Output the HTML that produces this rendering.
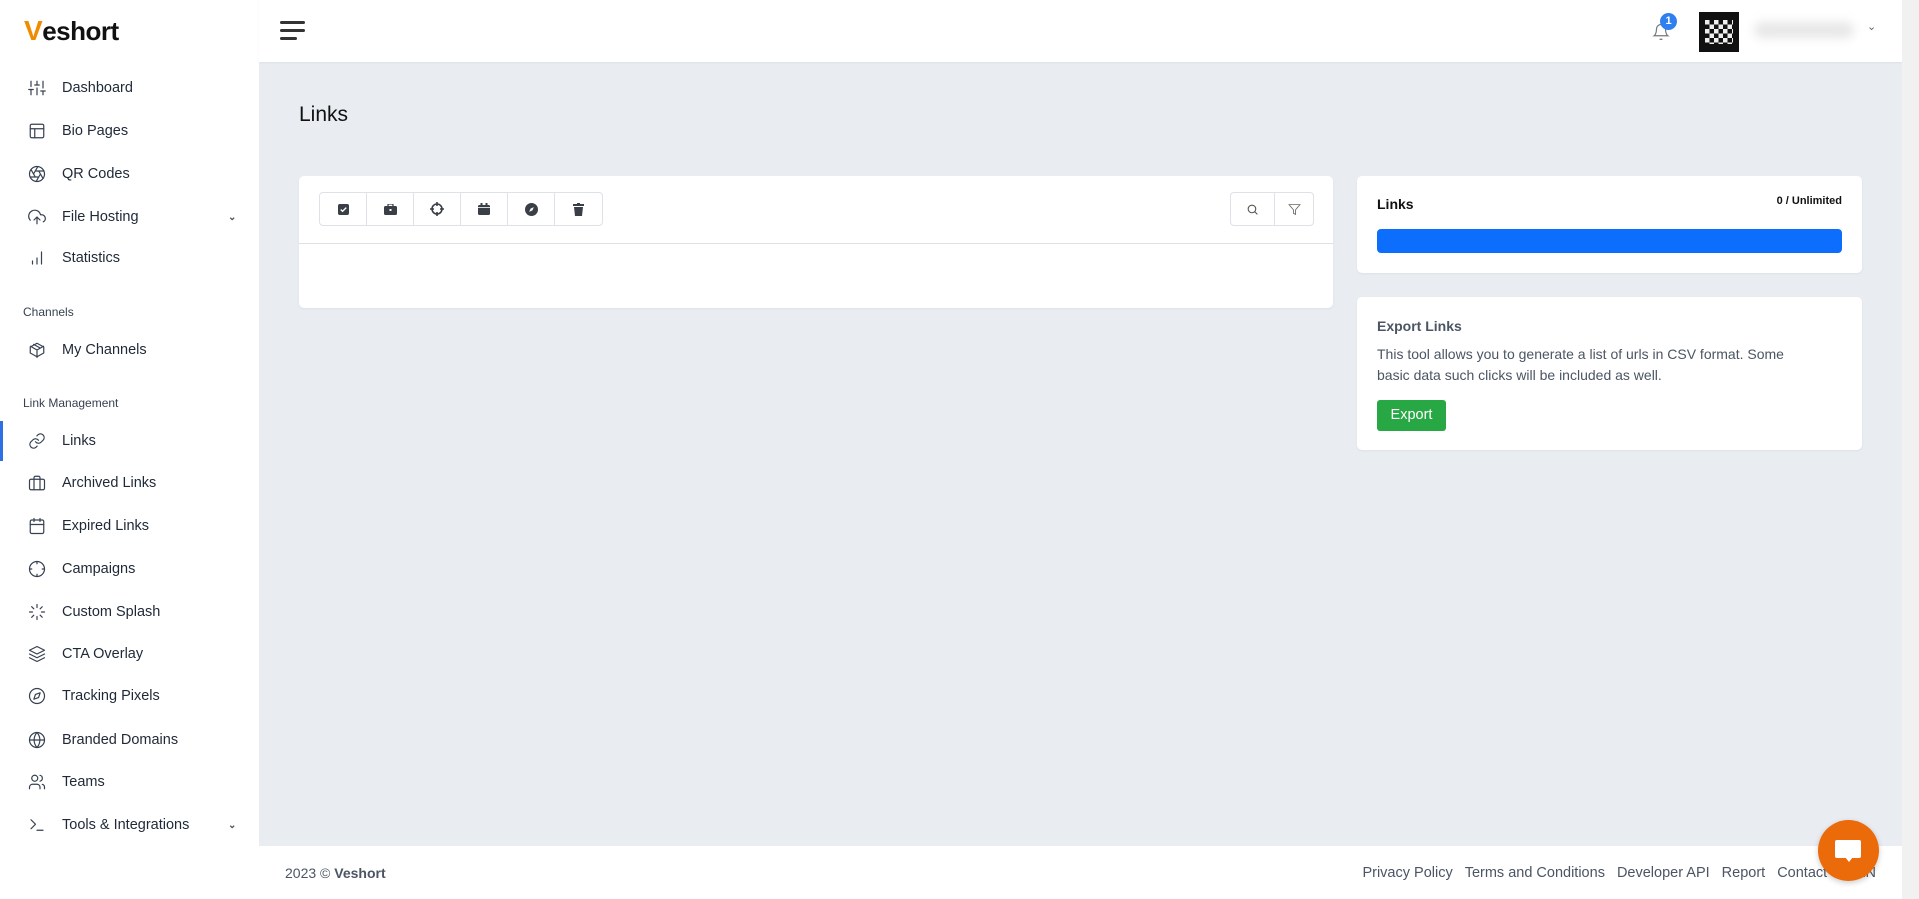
<!DOCTYPE html>
<html><head><meta charset="utf-8"><style>
*{box-sizing:border-box;margin:0;padding:0}
body{width:1919px;height:899px;overflow:hidden;background:#e9ecf1;font-family:"Liberation Sans",sans-serif;position:relative;color:#1f2937}
.sb{position:absolute;left:0;top:0;width:259px;height:899px;background:#fff}
.hd{position:absolute;left:259px;top:0;width:1643px;height:62px;background:#fff;box-shadow:0 1px 2px rgba(0,0,0,.05)}
.scroll{position:absolute;right:0;top:0;width:17px;height:899px;background:#f1f1f1}
.ni{position:absolute;left:0;width:259px;height:40px;display:flex;align-items:center;font-size:14.5px;color:#1f2937}
.ni svg{position:absolute;left:28px;width:18px;height:18px;fill:none;stroke:#374151;stroke-width:1.6;stroke-linecap:round;stroke-linejoin:round}
.ni span{position:absolute;left:62px}
.ni .ch{position:absolute;left:228px;font-size:10px;color:#555}
.sec{position:absolute;left:23px;font-size:12px;color:#374151}
.card{position:absolute;background:#fff;border-radius:5px;box-shadow:0 1px 2px rgba(0,0,0,.05)}
.tb{position:absolute;display:flex;border:1px solid #dee2e6;border-radius:4px;height:34px}
.tb div{width:47px;border-right:1px solid #dee2e6;display:flex;align-items:center;justify-content:center}
.tb div:last-child{border-right:none}
.ft{position:absolute;left:259px;top:846px;width:1643px;height:53px;background:#fff}
.fl{position:absolute;right:26px;top:19px;font-size:14.5px;color:#4b5563;display:flex;gap:12px}
</style></head><body>
<div class="sb">
 <div style="position:absolute;left:24px;top:15px;font-size:26px;font-weight:bold;color:#111;letter-spacing:-0.5px"><span style="color:#f08c00;font-size:28px">V</span>eshort</div>
 <div class="ni" style="top:68px"><svg viewBox="0 0 24 24"><path d="M4 21v-7M4 10V3M12 21v-9M12 8V3M20 21v-5M20 12V3M1 14h6M9 8h6M17 16h6"/></svg><span>Dashboard</span></div>
 <div class="ni" style="top:111px"><svg viewBox="0 0 24 24"><rect x="3" y="3" width="18" height="18" rx="2"/><path d="M3 9h18M9 21V9"/></svg><span>Bio Pages</span></div>
 <div class="ni" style="top:154px"><svg viewBox="0 0 24 24"><circle cx="12" cy="12" r="10"/><path d="M14.3 8l5.7 9.9M9.7 8h11.5M7.4 12l5.7-9.9M9.7 16L4 6.1M14.3 16H2.8M16.6 12l-5.7 9.9"/></svg><span>QR Codes</span></div>
 <div class="ni" style="top:197px"><svg viewBox="0 0 24 24"><path d="M16 16l-4-4-4 4M12 12v9M20.4 18.4A5 5 0 0018 9h-1.3A8 8 0 103 16.3"/></svg><span>File Hosting</span><b class="ch">&#8964;</b></div>
 <div class="ni" style="top:238px"><svg viewBox="0 0 24 24"><path d="M18 20V4M12 20v-8M6 20v-4"/></svg><span>Statistics</span></div>
 <div class="sec" style="top:305px">Channels</div>
 <div class="ni" style="top:330px"><svg viewBox="0 0 24 24"><path d="M21 16V8l-9-5-9 5v8l9 5 9-5zM3.3 7L12 12l8.7-5M12 22V12M7.5 4.5l9 5"/></svg><span>My Channels</span></div>
 <div class="sec" style="top:396px">Link Management</div>
 <div style="position:absolute;left:0;top:421px;width:3px;height:40px;background:#2f6fe4"></div>
 <div class="ni" style="top:421px"><svg viewBox="0 0 24 24"><path d="M10 13a5 5 0 007.5.5l3-3a5 5 0 00-7-7l-1.7 1.7"/><path d="M14 11a5 5 0 00-7.5-.5l-3 3a5 5 0 007 7l1.7-1.7"/></svg><span>Links</span></div>
 <div class="ni" style="top:463px"><svg viewBox="0 0 24 24"><rect x="2" y="7" width="20" height="14" rx="2"/><path d="M16 21V5a2 2 0 00-2-2h-4a2 2 0 00-2 2v16"/></svg><span>Archived Links</span></div>
 <div class="ni" style="top:506px"><svg viewBox="0 0 24 24"><rect x="3" y="4" width="18" height="18" rx="2"/><path d="M16 2v4M8 2v4M3 10h18"/></svg><span>Expired Links</span></div>
 <div class="ni" style="top:549px"><svg viewBox="0 0 24 24"><circle cx="12" cy="12" r="10"/><path d="M22 12h-3M5 12H2M12 5V2M12 22v-3"/></svg><span>Campaigns</span></div>
 <div class="ni" style="top:592px"><svg viewBox="0 0 24 24"><path d="M12 2v4M12 18v4M4.9 4.9l2.8 2.8M16.2 16.2l2.8 2.8M2 12h4M18 12h4M4.9 19.1l2.8-2.8M16.2 7.8l2.8-2.8"/></svg><span>Custom Splash</span></div>
 <div class="ni" style="top:634px"><svg viewBox="0 0 24 24"><path d="M12 2L2 7l10 5 10-5-10-5zM2 17l10 5 10-5M2 12l10 5 10-5"/></svg><span>CTA Overlay</span></div>
 <div class="ni" style="top:676px"><svg viewBox="0 0 24 24"><circle cx="12" cy="12" r="10"/><path d="M16.2 7.8l-2.1 6.3-6.3 2.1 2.1-6.3z"/></svg><span>Tracking Pixels</span></div>
 <div class="ni" style="top:720px"><svg viewBox="0 0 24 24"><circle cx="12" cy="12" r="10"/><path d="M2 12h20M12 2a15 15 0 010 20M12 2a15 15 0 000 20"/></svg><span>Branded Domains</span></div>
 <div class="ni" style="top:762px"><svg viewBox="0 0 24 24"><circle cx="9" cy="7" r="4"/><path d="M2 21v-2a4 4 0 014-4h6a4 4 0 014 4v2M16 3.1a4 4 0 010 7.8M22 21v-2a4 4 0 00-3-3.9"/></svg><span>Teams</span></div>
 <div class="ni" style="top:805px"><svg viewBox="0 0 24 24"><path d="M4 17l6-6-6-6M12 19h8"/></svg><span>Tools &amp; Integrations</span><b class="ch">&#8964;</b></div>
</div>
<div class="hd">
 <div style="position:absolute;left:21px;top:21px;width:25px;height:3px;background:#333;border-radius:2px"></div>
 <div style="position:absolute;left:21px;top:29px;width:25px;height:3px;background:#333;border-radius:2px"></div>
 <div style="position:absolute;left:21px;top:37px;width:17px;height:3px;background:#333;border-radius:2px"></div>
 <svg style="position:absolute;left:1393px;top:22px" width="18" height="20" viewBox="0 0 24 24" fill="none" stroke="#777" stroke-width="1.6"><path d="M18 8A6 6 0 006 8c0 7-3 9-3 9h18s-3-2-3-9M13.7 21a2 2 0 01-3.4 0"/></svg>
 <div style="position:absolute;left:1401px;top:13px;width:17px;height:17px;border-radius:50%;background:#2f7ff0;color:#fff;font-size:11px;font-weight:bold;text-align:center;line-height:17px">1</div>
 <div style="position:absolute;left:1440px;top:12px;width:40px;height:40px;background:#111;overflow:hidden">
  <div style="position:absolute;left:6px;top:8px;width:28px;height:24px;background:repeating-conic-gradient(#111 0 25%,#eee 0 50%) 0 0/9px 9px"></div>
 </div>
 <div style="position:absolute;left:1495px;top:22px;width:100px;height:16px;border-radius:8px;background:#e7e7e7;filter:blur(5px)"></div>
 <div style="position:absolute;left:1608px;top:20px;font-size:11px;color:#666">&#8964;</div>
</div>
<div class="scroll"></div>
<div style="position:absolute;left:299px;top:103px;font-size:21px;color:#111">Links</div>
<div class="card" style="left:299px;top:176px;width:1034px;height:132px">
 <div class="tb" style="left:20px;top:16px">
  <div><svg width="11" height="11" viewBox="0 0 12 12"><rect width="12" height="12" rx="2" fill="#3a3f47"/><path d="M3 6l2 2 4-4" stroke="#fff" stroke-width="1.5" fill="none"/></svg></div>
  <div><svg width="13" height="11" viewBox="0 0 13 11"><rect y="2" width="13" height="9" rx="1.5" fill="#3a3f47"/><rect x="4" y="0" width="5" height="3" rx="1" fill="none" stroke="#3a3f47" stroke-width="1.3"/><rect x="5.5" y="5" width="2" height="2" fill="#fff"/></svg></div>
  <div><svg width="14" height="14" viewBox="0 0 14 14" fill="none" stroke="#3a3f47" stroke-width="1.6"><circle cx="7" cy="7" r="5"/><path d="M7 0v4M7 10v4M0 7h4M10 7h4"/></svg></div>
  <div><svg width="12" height="12" viewBox="0 0 12 12"><rect y="2" width="12" height="10" rx="1.5" fill="#3a3f47"/><rect x="2.5" y="0" width="2" height="3" fill="#3a3f47"/><rect x="7.5" y="0" width="2" height="3" fill="#3a3f47"/><rect y="4" width="12" height="0.8" fill="#fff"/></svg></div>
  <div><svg width="13" height="13" viewBox="0 0 14 14"><circle cx="7" cy="7" r="7" fill="#3a3f47"/><path d="M9.5 4.5L8 8 4.5 9.5 6 6z" fill="#fff"/></svg></div>
  <div><svg width="11" height="13" viewBox="0 0 11 13"><rect x="0" y="1" width="11" height="2" fill="#3a3f47"/><rect x="4" y="0" width="3" height="2" fill="#3a3f47"/><path d="M1 4h9l-1 9H2z" fill="#3a3f47"/></svg></div>
 </div>
 <div class="tb" style="left:931px;top:16px"><div style="width:44px"><svg width="13" height="13" viewBox="0 0 24 24" fill="none" stroke="#555" stroke-width="2"><circle cx="11" cy="11" r="7"/><path d="M21 21l-5-5"/></svg></div><div style="width:38px"><svg width="13" height="13" viewBox="0 0 24 24" fill="none" stroke="#666" stroke-width="1.6"><path d="M22 3H2l8 9.5V19l4 2v-8.5z"/></svg></div></div>
 <div style="position:absolute;left:0;top:67px;width:100%;height:1px;background:#dee2e6"></div>
</div>
<div class="card" style="left:1357px;top:176px;width:505px;height:97px">
 <div style="position:absolute;left:20px;top:20px;font-size:14px;font-weight:bold;color:#111">Links</div>
 <div style="position:absolute;right:20px;top:19px;font-size:11px;font-weight:bold;color:#111">0 / Unlimited</div>
 <div style="position:absolute;left:20px;top:53px;width:465px;height:24px;background:#0d6efd;border-radius:4px"></div>
</div>
<div class="card" style="left:1357px;top:297px;width:505px;height:153px">
 <div style="position:absolute;left:20px;top:21px;font-size:14px;font-weight:bold;color:#4b5563">Export Links</div>
 <div style="position:absolute;left:20px;top:47px;width:440px;font-size:14px;line-height:21px;color:#4b5563">This tool allows you to generate a list of urls in CSV format. Some basic data such clicks will be included as well.</div>
 <div style="position:absolute;left:20px;top:103px;width:69px;height:31px;background:#28a745;border-radius:3px;color:#fff;font-size:14.5px;text-align:center;line-height:31px">Export</div>
</div>
<div class="ft">
 <div style="position:absolute;left:26px;top:19px;font-size:14px;color:#4b5563">2023 © <b>Veshort</b></div>
 <div class="fl"><span>Privacy Policy</span><span>Terms and Conditions</span><span>Developer API</span><span>Report</span><span>Contact</span><span>&#9678; EN</span></div>
</div>
<div style="position:absolute;left:1818px;top:820px;width:61px;height:61px;border-radius:50%;background:#eb6a0a;box-shadow:0 2px 6px rgba(0,0,0,.2)">
 <div style="position:absolute;left:17px;top:20px;width:26px;height:18px;background:#fff;border-radius:2px"></div>
 <div style="position:absolute;left:27px;top:37px;width:0;height:0;border-left:4px solid transparent;border-right:4px solid transparent;border-top:5px solid #fff"></div>
</div>
</body></html>
